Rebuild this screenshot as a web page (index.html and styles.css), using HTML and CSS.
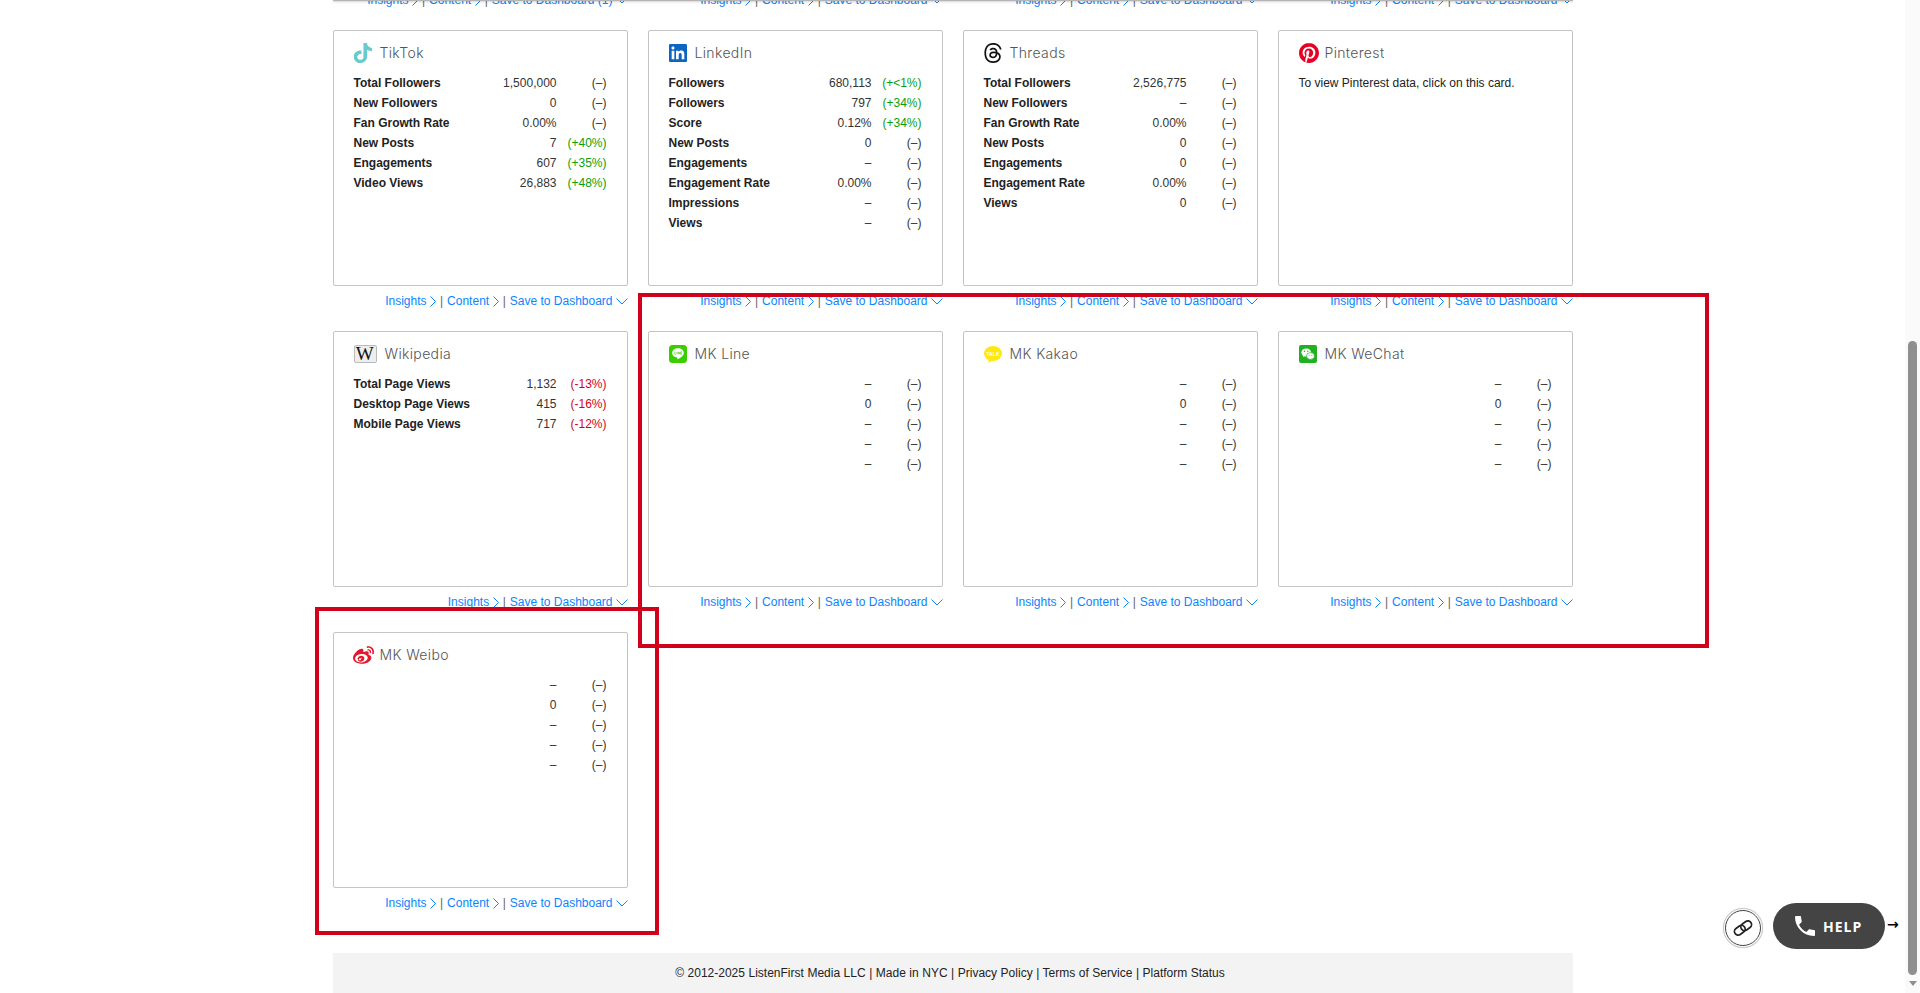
FILE: index.html
```html
<!DOCTYPE html>
<html lang="en">
<head>
<meta charset="utf-8">
<title>ListenFirst</title>
<link rel="stylesheet" href="styles.css">
</head>
<body>
<svg class="defs" width="0" height="0" aria-hidden="true">
  <symbol id="cr" viewBox="0 0 6 11"><path d="M.5.5 5.5 5.5.5 10.5" fill="none" stroke="currentColor" stroke-width="1"/></symbol>
  <symbol id="cd" viewBox="0 0 12 7"><path d="M.5.5 6 6 11.500.5" fill="none" stroke="currentColor" stroke-width="1"/></symbol>
</svg>
<div class="page">
  <main class="main">
    <div class="topline"></div>
    <div class="content">
      <div class="grid">
        <div class="links"><a>Insights</a><svg class="chev-r"><use href="#cr"/></svg><span class="sep">|</span><a>Content</a><svg class="chev-r"><use href="#cr"/></svg><span class="sep">|</span><a>Save to Dashboard (1)</a><svg class="chev-d"><use href="#cd"/></svg></div>
        <div class="links"><a>Insights</a><svg class="chev-r"><use href="#cr"/></svg><span class="sep">|</span><a>Content</a><svg class="chev-r"><use href="#cr"/></svg><span class="sep">|</span><a>Save to Dashboard</a><svg class="chev-d"><use href="#cd"/></svg></div>
        <div class="links"><a>Insights</a><svg class="chev-r"><use href="#cr"/></svg><span class="sep">|</span><a>Content</a><svg class="chev-r"><use href="#cr"/></svg><span class="sep">|</span><a>Save to Dashboard</a><svg class="chev-d"><use href="#cd"/></svg></div>
        <div class="links"><a>Insights</a><svg class="chev-r"><use href="#cr"/></svg><span class="sep">|</span><a>Content</a><svg class="chev-r"><use href="#cr"/></svg><span class="sep">|</span><a>Save to Dashboard</a><svg class="chev-d"><use href="#cd"/></svg></div>

        <section class="tile">
          <div class="card">
            <h3 class="title"><span class="icon"><svg class="i-tiktok" viewBox="2 0 20 24" preserveAspectRatio="none"><path fill="#69c9d0" d="M12.525.02c1.31-.02 2.61-.01 3.91-.02.08 1.53.63 3.09 1.75 4.17 1.12 1.11 2.7 1.62 4.24 1.79v4.03c-1.44-.05-2.89-.35-4.2-.97-.57-.26-1.1-.59-1.62-.93-.01 2.92.01 5.84-.02 8.75-.08 1.4-.54 2.79-1.35 3.94-1.31 1.92-3.58 3.17-5.91 3.21-1.43.08-2.86-.31-4.08-1.03-2.02-1.19-3.44-3.37-3.65-5.71-.02-.5-.03-1-.01-1.49.18-1.9 1.12-3.72 2.58-4.96 1.66-1.44 3.98-2.13 6.15-1.72.02 1.48-.04 2.96-.04 4.44-.99-.32-2.15-.23-3.02.37-.63.41-1.11 1.04-1.36 1.75-.21.51-.15 1.07-.14 1.61.24 1.64 1.82 3.02 3.5 2.87 1.12-.01 2.19-.66 2.77-1.61.19-.33.4-.67.41-1.06.1-1.79.06-3.57.07-5.36.01-4.03-.01-8.05.02-12.07z"/></svg></span>TikTok</h3>
            <div class="row"><span class="label">Total Followers</span><span class="val">1,500,000</span><span class="delta">(–)</span></div>
            <div class="row"><span class="label">New Followers</span><span class="val">0</span><span class="delta">(–)</span></div>
            <div class="row"><span class="label">Fan Growth Rate</span><span class="val">0.00%</span><span class="delta">(–)</span></div>
            <div class="row"><span class="label">New Posts</span><span class="val">7</span><span class="delta up">(+40%)</span></div>
            <div class="row"><span class="label">Engagements</span><span class="val">607</span><span class="delta up">(+35%)</span></div>
            <div class="row"><span class="label">Video Views</span><span class="val">26,883</span><span class="delta up">(+48%)</span></div>
          </div>
          <div class="links"><a>Insights</a><svg class="chev-r"><use href="#cr"/></svg><span class="sep">|</span><a>Content</a><svg class="chev-r"><use href="#cr"/></svg><span class="sep">|</span><a>Save to Dashboard</a><svg class="chev-d"><use href="#cd"/></svg></div>
        </section>

        <section class="tile">
          <div class="card">
            <h3 class="title"><span class="icon"><svg class="i-square" viewBox="0 0 24 24"><rect x="0" y="0" width="24" height="24" rx="2" fill="#fff"/><path fill="#0a66c2" d="M20.447 20.452h-3.554v-5.569c0-1.328-.027-3.037-1.852-3.037-1.853 0-2.136 1.445-2.136 2.939v5.667H9.351V9h3.414v1.561h.046c.477-.9 1.637-1.85 3.37-1.85 3.601 0 4.267 2.37 4.267 5.455v6.286zM5.337 7.433c-1.144 0-2.063-.926-2.063-2.065 0-1.138.92-2.063 2.063-2.063 1.14 0 2.064.925 2.064 2.063 0 1.139-.925 2.065-2.064 2.065zm1.782 13.019H3.555V9h3.564v11.452zM22.225 0H1.771C.792 0 0 .774 0 1.729v20.542C0 23.227.792 24 1.771 24h20.451C23.2 24 24 23.227 24 22.271V1.729C24 .774 23.2 0 22.222 0h.003z"/></svg></span>LinkedIn</h3>
            <div class="row"><span class="label">Followers</span><span class="val">680,113</span><span class="delta up">(+&lt;1%)</span></div>
            <div class="row"><span class="label">Followers</span><span class="val">797</span><span class="delta up">(+34%)</span></div>
            <div class="row"><span class="label">Score</span><span class="val">0.12%</span><span class="delta up">(+34%)</span></div>
            <div class="row"><span class="label">New Posts</span><span class="val">0</span><span class="delta">(–)</span></div>
            <div class="row"><span class="label">Engagements</span><span class="val">–</span><span class="delta">(–)</span></div>
            <div class="row"><span class="label">Engagement Rate</span><span class="val">0.00%</span><span class="delta">(–)</span></div>
            <div class="row"><span class="label">Impressions</span><span class="val">–</span><span class="delta">(–)</span></div>
            <div class="row"><span class="label">Views</span><span class="val">–</span><span class="delta">(–)</span></div>
          </div>
          <div class="links"><a>Insights</a><svg class="chev-r"><use href="#cr"/></svg><span class="sep">|</span><a>Content</a><svg class="chev-r"><use href="#cr"/></svg><span class="sep">|</span><a>Save to Dashboard</a><svg class="chev-d"><use href="#cd"/></svg></div>
        </section>

        <section class="tile">
          <div class="card">
            <h3 class="title"><span class="icon"><svg class="i-threads" viewBox="1 0 22 24" preserveAspectRatio="none"><path fill="#111" d="M12.186 24h-.007c-3.581-.024-6.334-1.205-8.184-3.509C2.35 18.44 1.5 15.586 1.472 12.01v-.017c.03-3.579.879-6.43 2.525-8.482C5.845 1.205 8.6.024 12.18 0h.014c2.746.02 5.043.725 6.826 2.098 1.677 1.29 2.858 3.13 3.509 5.467l-2.04.569c-1.104-3.96-3.898-5.984-8.304-6.015-2.91.022-5.11.936-6.54 2.717C4.307 6.504 3.616 8.914 3.589 12c.027 3.086.718 5.496 2.057 7.164 1.43 1.783 3.631 2.698 6.54 2.717 2.623-.02 4.358-.631 5.8-2.045 1.647-1.613 1.618-3.593 1.09-4.798-.31-.71-.873-1.3-1.634-1.75-.192 1.352-.622 2.446-1.284 3.272-.886 1.102-2.14 1.704-3.73 1.79-1.202.065-2.361-.218-3.259-.801-1.063-.689-1.685-1.74-1.752-2.964-.065-1.19.408-2.285 1.33-3.082.88-.76 2.119-1.207 3.583-1.291a13.853 13.853 0 0 1 3.02.142c-.126-.742-.375-1.332-.75-1.757-.513-.586-1.308-.883-2.359-.89h-.029c-.844 0-1.992.232-2.721 1.32L7.734 7.847c.98-1.454 2.568-2.256 4.478-2.256h.044c3.194.02 5.097 1.975 5.287 5.388.108.046.216.094.321.142 1.49.7 2.58 1.761 3.154 3.07.797 1.82.871 4.79-1.548 7.158-1.85 1.81-4.094 2.628-7.277 2.65Zm1.003-11.69c-.242 0-.487.007-.739.021-1.836.103-2.98.946-2.916 2.143.067 1.256 1.452 1.839 2.784 1.767 1.224-.065 2.818-.543 3.086-3.71a10.5 10.5 0 0 0-2.215-.221z"/></svg></span>Threads</h3>
            <div class="row"><span class="label">Total Followers</span><span class="val">2,526,775</span><span class="delta">(–)</span></div>
            <div class="row"><span class="label">New Followers</span><span class="val">–</span><span class="delta">(–)</span></div>
            <div class="row"><span class="label">Fan Growth Rate</span><span class="val">0.00%</span><span class="delta">(–)</span></div>
            <div class="row"><span class="label">New Posts</span><span class="val">0</span><span class="delta">(–)</span></div>
            <div class="row"><span class="label">Engagements</span><span class="val">0</span><span class="delta">(–)</span></div>
            <div class="row"><span class="label">Engagement Rate</span><span class="val">0.00%</span><span class="delta">(–)</span></div>
            <div class="row"><span class="label">Views</span><span class="val">0</span><span class="delta">(–)</span></div>
          </div>
          <div class="links"><a>Insights</a><svg class="chev-r"><use href="#cr"/></svg><span class="sep">|</span><a>Content</a><svg class="chev-r"><use href="#cr"/></svg><span class="sep">|</span><a>Save to Dashboard</a><svg class="chev-d"><use href="#cd"/></svg></div>
        </section>

        <section class="tile">
          <div class="card">
            <h3 class="title"><span class="icon"><svg class="i-pin" viewBox="0 0 24 24"><path fill="#e60023" d="M12.017 0C5.396 0 .029 5.367.029 11.987c0 5.079 3.158 9.417 7.618 11.162-.105-.949-.199-2.403.041-3.439.219-.937 1.406-5.957 1.406-5.957s-.359-.72-.359-1.781c0-1.663.967-2.911 2.168-2.911 1.024 0 1.518.769 1.518 1.688 0 1.029-.653 2.567-.992 3.992-.285 1.193.6 2.165 1.775 2.165 2.128 0 3.768-2.245 3.768-5.487 0-2.861-2.063-4.869-5.008-4.869-3.41 0-5.409 2.562-5.409 5.199 0 1.033.394 2.143.889 2.741.099.12.112.225.085.345-.09.375-.293 1.199-.334 1.363-.053.225-.172.271-.401.165-1.495-.69-2.433-2.878-2.433-4.646 0-3.776 2.748-7.252 7.92-7.252 4.158 0 7.392 2.967 7.392 6.923 0 4.135-2.607 7.462-6.233 7.462-1.214 0-2.354-.629-2.758-1.379l-.749 2.848c-.269 1.045-1.004 2.352-1.498 3.146 1.123.345 2.306.535 3.55.535 6.607 0 11.985-5.365 11.985-11.987C23.97 5.39 18.592.026 11.985.026L12.017 0z"/></svg></span>Pinterest</h3>
            <div class="row"><span class="note">To view Pinterest data, click on this card.</span></div>
          </div>
          <div class="links"><a>Insights</a><svg class="chev-r"><use href="#cr"/></svg><span class="sep">|</span><a>Content</a><svg class="chev-r"><use href="#cr"/></svg><span class="sep">|</span><a>Save to Dashboard</a><svg class="chev-d"><use href="#cd"/></svg></div>
        </section>

        <section class="tile">
          <div class="card">
            <h3 class="title"><span class="icon icon-wide"><span class="wiki">W</span></span>Wikipedia</h3>
            <div class="row"><span class="label">Total Page Views</span><span class="val">1,132</span><span class="delta down">(-13%)</span></div>
            <div class="row"><span class="label">Desktop Page Views</span><span class="val">415</span><span class="delta down">(-16%)</span></div>
            <div class="row"><span class="label">Mobile Page Views</span><span class="val">717</span><span class="delta down">(-12%)</span></div>
          </div>
          <div class="links"><a>Insights</a><svg class="chev-r"><use href="#cr"/></svg><span class="sep">|</span><a>Save to Dashboard</a><svg class="chev-d"><use href="#cd"/></svg></div>
        </section>

        <section class="tile">
          <div class="card">
            <h3 class="title"><span class="icon"><svg class="i-square" viewBox="0 0 18 18"><rect width="18" height="18" rx="3.500" fill="#3ace01"/><path fill="#fff" d="M9 3.200c-3.200 0-5.800 2.100-5.800 4.700 0 2.300 2 4.300 4.800 4.600.6.100.4.800.3 1.300-.1.500.3.600.8.300 2-1.200 5.700-3.500 5.700-6.200 0-2.600-2.600-4.700-5.800-4.700z"/><path d="M5.800 6.900v2.300h1.300M8 6.900v2.300M9.200 9.200V6.900l1.500 2.300V6.900M13 6.900h-1.300v2.300H13M11.700 8H13" fill="none" stroke="#3ace01" stroke-width=".6"/></svg></span>MK Line</h3>
            <div class="row"><span class="label"></span><span class="val">–</span><span class="delta">(–)</span></div>
            <div class="row"><span class="label"></span><span class="val">0</span><span class="delta">(–)</span></div>
            <div class="row"><span class="label"></span><span class="val">–</span><span class="delta">(–)</span></div>
            <div class="row"><span class="label"></span><span class="val">–</span><span class="delta">(–)</span></div>
            <div class="row"><span class="label"></span><span class="val">–</span><span class="delta">(–)</span></div>
          </div>
          <div class="links"><a>Insights</a><svg class="chev-r"><use href="#cr"/></svg><span class="sep">|</span><a>Content</a><svg class="chev-r"><use href="#cr"/></svg><span class="sep">|</span><a>Save to Dashboard</a><svg class="chev-d"><use href="#cd"/></svg></div>
        </section>

        <section class="tile">
          <div class="card">
            <h3 class="title"><span class="icon"><svg class="i-kakao" viewBox="0 0 18 17"><ellipse cx="9" cy="7.500" rx="9" ry="7.500" fill="#ffe812"/><path fill="#ffe812" d="M4 12l.8 5 4-3z"/><text x="9" y="9.500" class="talk" text-anchor="middle">TALK</text></svg></span>MK Kakao</h3>
            <div class="row"><span class="label"></span><span class="val">–</span><span class="delta">(–)</span></div>
            <div class="row"><span class="label"></span><span class="val">0</span><span class="delta">(–)</span></div>
            <div class="row"><span class="label"></span><span class="val">–</span><span class="delta">(–)</span></div>
            <div class="row"><span class="label"></span><span class="val">–</span><span class="delta">(–)</span></div>
            <div class="row"><span class="label"></span><span class="val">–</span><span class="delta">(–)</span></div>
          </div>
          <div class="links"><a>Insights</a><svg class="chev-r"><use href="#cr"/></svg><span class="sep">|</span><a>Content</a><svg class="chev-r"><use href="#cr"/></svg><span class="sep">|</span><a>Save to Dashboard</a><svg class="chev-d"><use href="#cd"/></svg></div>
        </section>

        <section class="tile">
          <div class="card">
            <h3 class="title"><span class="icon"><svg class="i-square" viewBox="0 0 18 18"><rect width="18" height="18" rx="2" fill="#20b020"/><ellipse cx="7.200" cy="7.500" rx="4.800" ry="4.100" fill="#fff"/><path fill="#fff" d="M4.500 10l-.7 2 2.300-1.200z"/><ellipse cx="11.500" cy="11" rx="4" ry="3.400" fill="#fff" stroke="#20b020" stroke-width=".7"/><circle cx="5.600" cy="6.300" r=".7" fill="#20b020"/><circle cx="8.800" cy="6.300" r=".7" fill="#20b020"/><circle cx="10.100" cy="10.300" r=".5" fill="#20b020"/><circle cx="12.900" cy="10.300" r=".5" fill="#20b020"/></svg></span>MK WeChat</h3>
            <div class="row"><span class="label"></span><span class="val">–</span><span class="delta">(–)</span></div>
            <div class="row"><span class="label"></span><span class="val">0</span><span class="delta">(–)</span></div>
            <div class="row"><span class="label"></span><span class="val">–</span><span class="delta">(–)</span></div>
            <div class="row"><span class="label"></span><span class="val">–</span><span class="delta">(–)</span></div>
            <div class="row"><span class="label"></span><span class="val">–</span><span class="delta">(–)</span></div>
          </div>
          <div class="links"><a>Insights</a><svg class="chev-r"><use href="#cr"/></svg><span class="sep">|</span><a>Content</a><svg class="chev-r"><use href="#cr"/></svg><span class="sep">|</span><a>Save to Dashboard</a><svg class="chev-d"><use href="#cd"/></svg></div>
        </section>

        <section class="tile">
          <div class="card">
            <h3 class="title"><span class="icon"><svg class="i-weibo" viewBox="0 2 24 20" preserveAspectRatio="none"><path fill="#e6162d" d="M10.098 20.323c-3.977.391-7.414-1.406-7.672-4.02-.259-2.609 2.759-5.047 6.74-5.441 3.979-.394 7.413 1.404 7.671 4.018.259 2.6-2.759 5.049-6.737 5.439l-.002.004zM9.05 17.219c-.384.616-1.208.884-1.829.602-.612-.279-.793-.991-.406-1.593.379-.595 1.176-.861 1.793-.601.622.263.82.972.442 1.592zm1.27-1.627c-.141.237-.449.353-.689.253-.236-.09-.313-.361-.177-.586.138-.227.436-.346.672-.24.239.09.315.36.18.601l.014-.028zm.176-2.719c-1.893-.493-4.033.45-4.857 2.118-.836 1.704-.026 3.591 1.886 4.21 1.983.64 4.318-.341 5.132-2.179.8-1.793-.201-3.642-2.161-4.149zm7.563-1.224c-.346-.105-.57-.18-.405-.615.375-.977.42-1.804 0-2.404-.781-1.112-2.915-1.053-5.364-.03 0 0-.766.331-.571-.271.376-1.217.315-2.224-.27-2.809-1.338-1.337-4.869.045-7.888 3.08C1.309 10.870 0 13.273 0 15.348c0 3.981 5.099 6.395 10.086 6.395 6.536 0 10.888-3.801 10.888-6.820 0-1.822-1.547-2.854-2.915-3.284v.01zm1.908-5.092c-.766-.856-1.908-1.187-2.96-.962-.436.09-.706.511-.616.932.09.42.511.691.932.602.511-.105 1.067.044 1.442.465.376.421.466.977.316 1.473-.136.406.089.856.51.992.405.119.857-.105.992-.512.33-1.021.12-2.178-.646-3.035l.03.045zm2.418-2.195c-1.576-1.757-3.905-2.419-6.054-1.968-.496.104-.812.587-.706 1.081.104.496.586.813 1.082.707 1.532-.331 3.185.15 4.296 1.383 1.112 1.246 1.429 2.943.947 4.416-.165.48.106 1.007.586 1.157.479.165.991-.104 1.157-.586.675-2.088.241-4.478-1.338-6.235l.03.045z"/></svg></span>MK Weibo</h3>
            <div class="row"><span class="label"></span><span class="val">–</span><span class="delta">(–)</span></div>
            <div class="row"><span class="label"></span><span class="val">0</span><span class="delta">(–)</span></div>
            <div class="row"><span class="label"></span><span class="val">–</span><span class="delta">(–)</span></div>
            <div class="row"><span class="label"></span><span class="val">–</span><span class="delta">(–)</span></div>
            <div class="row"><span class="label"></span><span class="val">–</span><span class="delta">(–)</span></div>
          </div>
          <div class="links"><a>Insights</a><svg class="chev-r"><use href="#cr"/></svg><span class="sep">|</span><a>Content</a><svg class="chev-r"><use href="#cr"/></svg><span class="sep">|</span><a>Save to Dashboard</a><svg class="chev-d"><use href="#cd"/></svg></div>
        </section>
      </div>
      <footer class="footer">© 2012-2025 ListenFirst Media LLC | Made in NYC | Privacy Policy | Terms of Service | Platform Status</footer>
    </div>

    <div class="mark mark-a"></div>
    <div class="mark mark-b"></div>

    <div class="link-btn"><svg class="link-ico" viewBox="0 0 24 24"><g fill="none" stroke="#222" stroke-width="1.900" transform="rotate(-35 12 12)"><rect x="1.500" y="8" width="12.500" height="8" rx="4"/><rect x="10" y="8" width="12.500" height="8" rx="4"/></g></svg></div>
    <div class="help"><svg class="phone" viewBox="3 3 18 18"><path fill="#fff" d="M6.620 10.790c1.440 2.830 3.760 5.140 6.590 6.590l2.200-2.200c.27-.27.67-.36 1.020-.24 1.120.37 2.330.57 3.570.57.55 0 1 .45 1 1V20c0 .55-.45 1-1 1-9.390 0-17-7.610-17-17 0-.55.45-1 1-1h3.500c.55 0 1 .45 1 1 0 1.250.2 2.450.57 3.570.11.35.03.74-.25 1.020l-2.200 2.200z"/></svg><span>HELP</span></div>
    <div class="help-arrow">→</div>
  </main>
  <div class="scrollbar">
    <div class="sb-space"></div>
    <div class="sb-thumb"></div>
    <div class="sb-arrow"></div>
  </div>
</div>
</body>
</html>
```
FILE: styles.css
```css
* { box-sizing: border-box; }
html, body { margin: 0; height: 993px; overflow: hidden; background: #fff; }
body { font-family: "Liberation Sans", Arial, sans-serif; font-size: 12px; color: #222; }
.defs { position: absolute; }
.page { display: flex; height: 993px; }
.main { flex: 1; position: relative; overflow: hidden; }
.content { width: 1240px; margin: -15px auto 0; }
.grid { display: grid; grid-template-columns: repeat(4, 295px); column-gap: 20px; grid-auto-rows: 301px; grid-template-rows: 45px; }
.topline { position: absolute; left: 333px; top: 0; width: 1240px; height: 1px; background: #b5b5b5; box-shadow: 0 1px 2px rgba(0,0,0,.25); z-index: 2; }

.tile { display: flex; flex-direction: column; }
.card { height: 256px; border: 1px solid #c4c4c4; border-radius: 2px; padding: 12px 20px 0 20px; background: #fff; }
.title { display: flex; align-items: flex-start; height: 20px; line-height: 19px; margin: 0 0 10px; font-family: Inter, sans-serif; font-size: 14px; font-weight: 300; color: #555; white-space: nowrap; letter-spacing: .35px; }
.icon { flex: none; display: flex; align-items: center; width: 26px; height: 20px; }
.icon-wide { width: 31px; }
.icon svg { display: block; }
.i-tiktok { width: 18px; height: 20px; }
.i-square { width: 18px; height: 18px; }
.i-threads { width: 18px; height: 20px; }
.i-pin { width: 20px; height: 20px; }
.i-kakao { width: 18px; height: 17px; }
.i-weibo { width: 21px; height: 18px; margin-left: -1px; }
.talk { font-family: "Liberation Sans", sans-serif; font-size: 4.500px; font-weight: 700; fill: #fff; }
.wiki { display: block; width: 23px; height: 18px; border: 1px solid #bbb; border-radius: 2px; background: #eee; font-family: "Liberation Serif", serif; font-size: 19px; line-height: 16px; text-align: center; color: #111; }

.row { display: flex; height: 20px; line-height: 20px; white-space: nowrap; }
.label { flex: 1; font-weight: 700; color: #222; }
.val { color: #333; text-align: right; }
.delta { width: 50px; text-align: right; color: #333; }
.up { color: #0a9e0a; }
.down { color: #d0021b; }
.note { color: #222; }

.links { display: flex; align-items: center; justify-content: flex-end; height: 45px; padding-bottom: 15px; white-space: nowrap; }
.links a { color: #0a84ff; }
.sep { color: #666; margin: 0 4px 0 3.500px; }
.chev-r { width: 6px; height: 11px; margin-left: 4px; color: #0a84ff; }
.chev-d { width: 12px; height: 7px; margin-left: 3px; color: #0a84ff; }

.footer { height: 40px; margin-top: 20px; padding-right: 5px; background: #f3f3f3; line-height: 40px; text-align: center; color: #222; word-spacing: .2px; }

.mark { position: absolute; border: 4px solid #d0021b; pointer-events: none; z-index: 3; }
.mark-a { left: 638px; top: 293px; width: 1071px; height: 355px; }
.mark-b { left: 315px; top: 607px; width: 344px; height: 328px; }

.link-btn { position: absolute; left: 1723px; top: 908px; width: 40px; height: 40px; border-radius: 50%; border: 1px solid #c8c8c8; box-shadow: 0 0 1px #ccc; background: #fff; display: flex; align-items: center; justify-content: center; z-index: 4; }
.link-btn::before { content: ""; position: absolute; inset: 1px; border: 1px solid #444; border-radius: 50%; }
.link-ico { width: 22px; height: 22px; }
.help { position: absolute; left: 1773px; top: 903px; width: 112px; height: 46px; border-radius: 23px; background: #444; display: flex; align-items: center; padding-left: 22px; gap: 8px; font-family: "Open Sans", sans-serif; font-size: 14px; font-weight: 700; letter-spacing: 1px; color: #fff; z-index: 4; }
.phone { width: 20px; height: 20px; }
.help-arrow { position: absolute; left: 1887px; top: 914px; font-family: "DejaVu Sans", sans-serif; font-size: 14px; font-weight: 700; line-height: 20px; color: #000; z-index: 4; }

.scrollbar { flex: none; width: 15px; height: 993px; background: #fafafa; display: flex; flex-direction: column; align-items: center; }
.sb-space { height: 341px; flex: none; }
.sb-thumb { width: 9px; height: 634px; flex: none; border-radius: 5px; background: #8f8f8f; }
.sb-arrow { margin-top: 6px; width: 0; height: 0; border-left: 4.500px solid transparent; border-right: 4.500px solid transparent; border-top: 5px solid #8f8f8f; }
```
